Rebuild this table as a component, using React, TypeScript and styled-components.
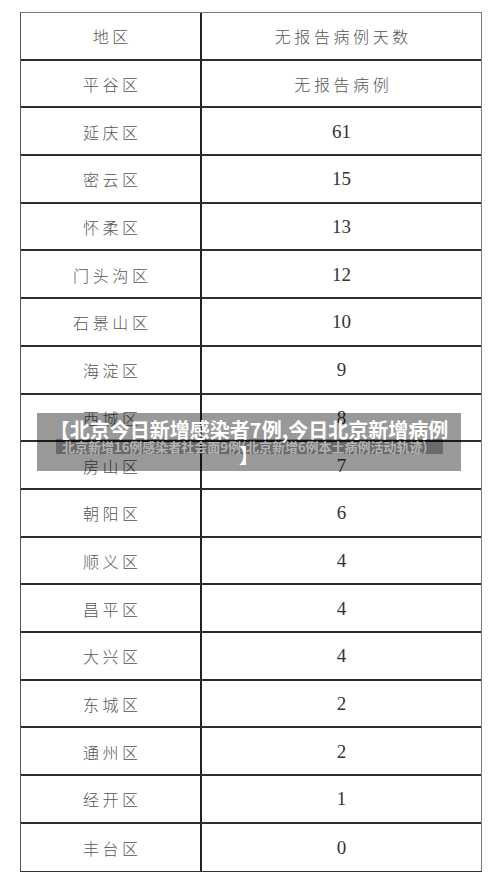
import React from "react";
import styled, { createGlobalStyle } from "styled-components";

const Global = createGlobalStyle`
  html, body { margin: 0; padding: 0; background: #ffffff; }
  body { width: 500px; height: 885px; overflow: hidden; font-family: "Noto Sans CJK SC", "Noto Sans", sans-serif; }
`;

const Page = styled.div`
  position: relative;
  width: 500px;
  height: 885px;
  padding-top: 12px;
  box-sizing: border-box;
`;

const Table = styled.div`
  margin-left: 20px;
  width: 462px;
  display: grid;
  grid-template-columns: 181px 1fr;
  grid-auto-rows: 47.7px;
  border: 1.5px solid #7a7a7a;
  border-left-color: #555;
  border-bottom-color: #333;
  box-sizing: border-box;
`;

const Cell = styled.div<{ $left?: boolean; $last?: boolean; $num?: boolean }>`
  display: flex;
  align-items: center;
  justify-content: center;
  box-sizing: border-box;
  border-bottom: ${(p) => (p.$last ? "none" : "2px solid #2e2e2e")};
  border-right: ${(p) => (p.$left ? "2px solid #222" : "none")};
  color: ${(p) => (p.$num ? "#333" : "#555")};
  font-family: ${(p) =>
    p.$num
      ? '"Liberation Serif", "Noto Sans CJK SC", serif'
      : '"Noto Sans CJK SC", "Noto Sans", sans-serif'};
  font-size: ${(p) => (p.$num ? "19px" : "16px")};
  font-weight: ${(p) => (p.$num ? 400 : 300)};
  letter-spacing: ${(p) => (p.$num ? "0" : "3.6px")};
  padding-left: ${(p) => (p.$num ? "0" : "3.6px")};
  padding-top: 1px;
`;

const Overlay = styled.div`
  position: absolute;
  left: 37px;
  top: 413px;
  width: 424px;
  height: 58px;
  box-sizing: border-box;
  background: rgba(0, 0, 0, 0.4);
  padding: 4px 8px 0;
`;

const SubBand = styled.div`
  position: absolute;
  left: 19px;
  top: 26px;
  width: 387px;
  height: 15px;
  box-sizing: border-box;
  padding-left: 6px;
  background: rgba(0, 0, 0, 0.3);
  color: #b4b4b4;
  font-size: 13px;
  line-height: 15px;
  text-align: left;
  white-space: nowrap;
  font-weight: 700;
`;

const Title = styled.div`
  position: relative;
  z-index: 1;
  color: #ffffff;
  font-size: 20px;
  line-height: 25px;
  font-weight: 700;
  text-align: center;
  line-break: anywhere;
`;

const rows: [string, string][] = [
  ["地区", "无报告病例天数"],
  ["平谷区", "无报告病例"],
  ["延庆区", "61"],
  ["密云区", "15"],
  ["怀柔区", "13"],
  ["门头沟区", "12"],
  ["石景山区", "10"],
  ["海淀区", "9"],
  ["西城区", "8"],
  ["房山区", "7"],
  ["朝阳区", "6"],
  ["顺义区", "4"],
  ["昌平区", "4"],
  ["大兴区", "4"],
  ["东城区", "2"],
  ["通州区", "2"],
  ["经开区", "1"],
  ["丰台区", "0"],
];

export default function App() {
  return (
    <>
      <Global />
      <Page>
        <Table>
          {rows.map(([a, b], i) => {
            const last = i === rows.length - 1;
            const num = /^\d+$/.test(b);
            return (
              <React.Fragment key={a}>
                <Cell $left $last={last}>{a}</Cell>
                <Cell $last={last} $num={num}>{b}</Cell>
              </React.Fragment>
            );
          })}
        </Table>
        <Overlay>
          <SubBand>北京新增16例感染者社会面9例(北京新增6例本土病例活动轨迹)</SubBand>
          <Title>【北京今日新增感染者7例,今日北京新增病例】</Title>
        </Overlay>
      </Page>
    </>
  );
}
